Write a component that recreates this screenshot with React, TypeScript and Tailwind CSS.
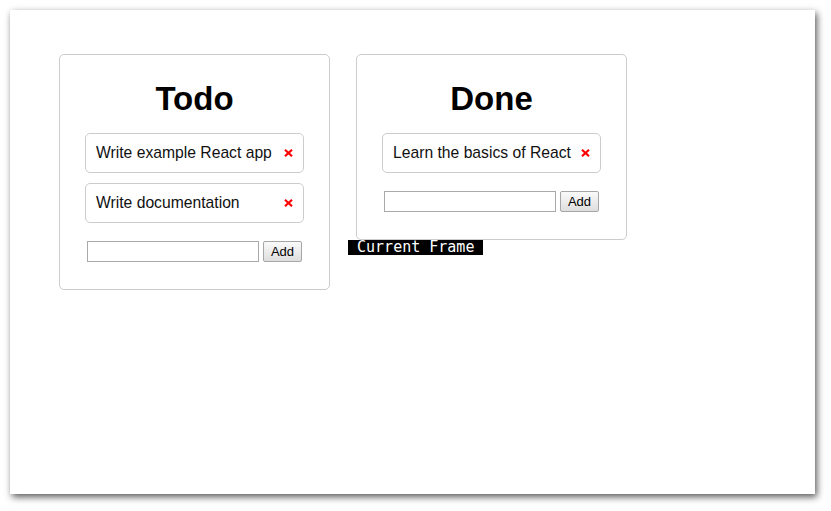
import { useState } from "react";

type ListProps = {
  title: string;
  items: string[];
};

const DeleteIcon = () => (
  <svg width="9" height="8" viewBox="0 0 9 8" className="shrink-0">
    <path d="M1 0.8 L8 7.2 M8 0.8 L1 7.2" stroke="#ff0000" strokeWidth="2.2" strokeLinecap="butt" />
  </svg>
);

const TodoList = ({ title, items }: ListProps) => {
  const [value, setValue] = useState("");

  return (
    <div className="w-[271px] rounded-[5px] border border-[#cccccc] bg-white pt-[25px] pb-[27px] flex flex-col items-center">
      <h1 className="text-[33px] leading-[37px] font-bold text-black">{title}</h1>
      <div className="mt-[16px] flex flex-col gap-[10px]">
        {items.map((item) => (
          <div
            key={item}
            className="w-[219px] h-[40px] rounded-[5px] border border-[#cccccc] pl-[10px] pr-[10px] flex items-center justify-between text-[15.7px] text-[#111111]"
          >
            <span>{item}</span>
            <DeleteIcon />
          </div>
        ))}
      </div>
      <form className="mt-[18px] flex items-center gap-[4px]" onSubmit={(e) => e.preventDefault()}>
        <input
          value={value}
          onChange={(e) => setValue(e.target.value)}
          className="w-[172px] h-[21px] border border-[#a9a9a9] bg-white px-1 text-[13px] outline-none"
        />
        <button
          type="submit"
          className="w-[39px] h-[21px] rounded-[2px] border border-[#a6a6a6] bg-gradient-to-b from-[#fafafa] to-[#dedede] text-[13px] leading-none text-black"
        >
          Add
        </button>
      </form>
    </div>
  );
};

export default function App() {
  return (
    <div className="w-[831px] h-[511px] bg-white pt-[10px] pl-[10px] font-['Liberation_Sans',Arial,sans-serif]">
      <div className="relative w-[805px] h-[484px] bg-white shadow-[2px_3px_7px_rgba(0,0,0,0.65)]">
        <div className="pt-[44px] pl-[49px] flex items-start gap-[26px]">
          <TodoList title="Todo" items={["Write example React app", "Write documentation"]} />
          <TodoList title="Done" items={["Learn the basics of React"]} />
        </div>
        <div className="absolute left-[338px] top-[230px] h-[15px] bg-black text-white text-[15px] leading-[15px] font-['DejaVu_Sans_Mono',monospace] whitespace-pre">
          {" Current Frame "}
        </div>
      </div>
    </div>
  );
}
